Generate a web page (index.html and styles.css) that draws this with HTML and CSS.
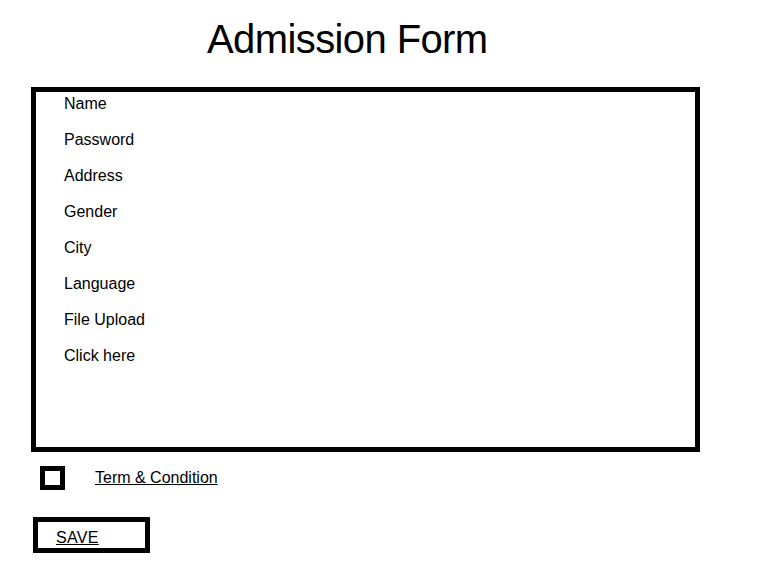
FILE: index.html
```html
<!DOCTYPE html>
<html>
<head>
<meta charset="utf-8">
<link rel="stylesheet" href="styles.css">
</head>
<body>
<h1 class="title">Admission Form</h1>
<div class="form-box">
  <div class="row">Name</div>
  <div class="row">Password</div>
  <div class="row">Address</div>
  <div class="row">Gender</div>
  <div class="row">City</div>
  <div class="row">Language</div>
  <div class="row">File Upload</div>
  <div class="row">Click here</div>
</div>
<div class="terms">
  <span class="check"></span>
  <a class="terms-link" href="#">Term &amp; Condition</a>
</div>
<div class="save"><a class="save-link" href="#">SAVE</a></div>
</body>
</html>
```
FILE: styles.css
```css
html, body {
  margin: 0;
  padding: 0;
  background: #fff;
}
body {
  font-family: "Liberation Sans", Arial, sans-serif;
  color: #000;
  font-size: 16px;
  width: 770px;
  height: 563px;
  overflow: hidden;
}
.title {
  margin: 0;
  padding: 16px 0 0 207px;
  font-size: 40px;
  font-weight: normal;
  letter-spacing: -0.6px;
  line-height: 46px;
  height: 71px;
  box-sizing: border-box;
}
.form-box {
  box-sizing: border-box;
  margin: 16px 0 0 31px;
  width: 669px;
  height: 365px;
  border: 5px solid #000;
  padding: 3px 0 0 28px;
  display: flex;
  flex-direction: column;
  gap: 18px;
}
.row {
  line-height: 18px;
  height: 18px;
}
.terms {
  display: flex;
  align-items: flex-start;
  margin: 14px 0 0 40px;
  height: 24px;
}
.check {
  box-sizing: border-box;
  width: 25px;
  height: 24px;
  border: 5px solid #000;
}
.terms-link {
  margin: 3px 0 0 30px;
  color: #000;
  text-decoration: underline;
  line-height: 18px;
}
.save {
  box-sizing: border-box;
  margin: 27px 0 0 33px;
  width: 117px;
  height: 36px;
  border: 5px solid #000;
  padding: 7px 0 0 18px;
}
.save-link {
  color: #000;
  text-decoration: underline;
  line-height: 18px;
  display: block;
  letter-spacing: 0.3px;
}
```
